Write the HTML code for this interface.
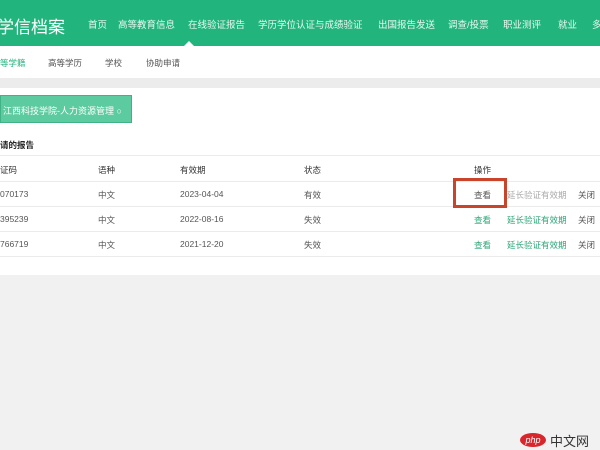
<!DOCTYPE html>
<html><head><meta charset="utf-8"><style>
*{margin:0;padding:0;box-sizing:border-box}
body{width:600px;height:450px;overflow:hidden;background:#f1f1f1;font-family:"Liberation Sans","Noto Sans CJK SC",sans-serif;position:relative}
.hdr{position:absolute;left:0;top:0;width:600px;height:46px;background:#22b47d}
.logo{position:absolute;left:-3px;top:13px;color:#fff;font-size:17px;letter-spacing:0px}
.nav span{position:absolute;top:17px;color:#e8f8f0;font-size:9.5px;white-space:nowrap}
.tri{position:absolute;left:184px;top:41px;width:0;height:0;border-left:5px solid transparent;border-right:5px solid transparent;border-bottom:5px solid #fff}
.sub{position:absolute;left:0;top:46px;width:600px;height:32px;background:#fff}
.sub span{position:absolute;top:11px;font-size:8.5px;color:#555}
.gray{position:absolute;left:0;top:78px;width:600px;height:10px;background:#ececec}
.main{position:absolute;left:0;top:88px;width:600px;height:187px;background:#fff}
.btn{position:absolute;left:0;top:95px;width:132px;height:28px;background:#5ccb9f;border:1px solid #40b285;color:#fff;font-size:9px;padding:8px 0 0 2px;white-space:nowrap}
.t{position:absolute;font-size:8.5px;color:#555;white-space:nowrap}
.b{color:#222;font-weight:bold}
.line{position:absolute;left:0;width:600px;height:1px;background:#ebebeb}
.g{color:#2aa676}.lg{color:#aaa}
.red{position:absolute;left:453px;top:178px;width:54px;height:30px;border:3px solid #c8442a}
.php{position:absolute;left:520px;top:433px;width:26px;height:14px;background:#d9262c;border-radius:50%;color:#fff;font-size:9px;font-style:italic;text-align:center;line-height:14px}
.cn{position:absolute;left:550px;top:431px;font-size:13px;color:#333}
</style></head><body>
<div class="hdr"></div>
<div class="logo">学信档案</div>
<div class="nav">
<span style="left:88px">首页</span><span style="left:118px">高等教育信息</span><span style="left:188px">在线验证报告</span><span style="left:258px">学历学位认证与成绩验证</span><span style="left:378px">出国报告发送</span><span style="left:448px">调查/投票</span><span style="left:503px">职业测评</span><span style="left:558px">就业</span><span style="left:592px">多</span>
</div>
<div class="tri"></div>
<div class="sub"><span style="left:0;color:#22b47d">等学籍</span><span style="left:48px">高等学历</span><span style="left:105px">学校</span><span style="left:146px">协助申请</span></div>
<div class="gray"></div>
<div class="main"></div>
<div class="btn">江西科技学院-人力资源管理 ○</div>
<div class="t b" style="left:0;top:139px">请的报告</div>
<div class="line" style="top:155px"></div>
<div class="t" style="left:0;top:164px;color:#333">证码</div>
<div class="t" style="left:98px;top:164px;color:#333">语种</div>
<div class="t" style="left:180px;top:164px;color:#333">有效期</div>
<div class="t" style="left:304px;top:164px;color:#333">状态</div>
<div class="t" style="left:474px;top:164px;color:#333">操作</div>
<div class="line" style="top:181px"></div>
<div class="t" style="left:0;top:189px">070173</div><div class="t" style="left:98px;top:189px">中文</div><div class="t" style="left:180px;top:189px">2023-04-04</div><div class="t" style="left:304px;top:189px">有效</div><div class="t" style="left:474px;top:189px">查看</div><div class="t lg" style="left:507px;top:189px">延长验证有效期</div><div class="t" style="left:578px;top:189px">关闭</div>
<div class="line" style="top:206px"></div>
<div class="t" style="left:0;top:214px">395239</div><div class="t" style="left:98px;top:214px">中文</div><div class="t" style="left:180px;top:214px">2022-08-16</div><div class="t" style="left:304px;top:214px">失效</div><div class="t g" style="left:474px;top:214px">查看</div><div class="t g" style="left:507px;top:214px">延长验证有效期</div><div class="t" style="left:578px;top:214px">关闭</div>
<div class="line" style="top:231px"></div>
<div class="t" style="left:0;top:239px">766719</div><div class="t" style="left:98px;top:239px">中文</div><div class="t" style="left:180px;top:239px">2021-12-20</div><div class="t" style="left:304px;top:239px">失效</div><div class="t g" style="left:474px;top:239px">查看</div><div class="t g" style="left:507px;top:239px">延长验证有效期</div><div class="t" style="left:578px;top:239px">关闭</div>
<div class="line" style="top:256px"></div>
<div class="red"></div>
<div class="php">php</div><div class="cn">中文网</div>
</body></html>
